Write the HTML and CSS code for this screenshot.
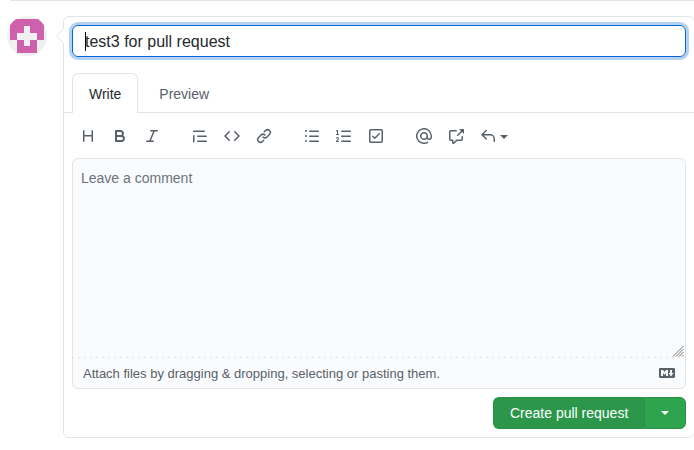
FILE: index.html
```html
<!DOCTYPE html>
<html lang="en">
<head>
<meta charset="utf-8">
<title>Open a pull request</title>
<link rel="stylesheet" href="styles.css">
</head>
<body>
<main class="page">
  <div class="divider"></div>
  <div class="timeline">
    <svg class="avatar" viewBox="0 0 40 40" shape-rendering="crispEdges">
      <path fill="#f0f0f0" d="M0 0h40v40H0z"/>
      <path fill="#cf61ac" fill-rule="evenodd" d="M3 3h34v20.500h-7V37H10V23.500H3zM17 10v7h-7v6.500h7V30h6v-6.500h7V17h-7v-7z"/>
    </svg>
    <form class="box">
      <svg class="pointer" viewBox="0 0 8 16"><path fill="#fff" d="M8 0L.7 8 8 16z"/><path fill="none" stroke="#e1e4e8" d="M7.500 .5L.7 8l6.800 7.500"/></svg>
      <div class="title"><span class="caret"></span>test3 for pull request</div>
      <nav class="tabs"><span class="tab active">Write</span><span class="tab">Preview</span></nav>
      <div class="toolbar">
        <div class="group">
          <svg viewBox="0 0 16 16"><path d="M3.75 2a.75.75 0 01.75.75V7h7V2.75a.75.75 0 011.5 0v10.5a.75.75 0 01-1.5 0V8.5h-7v4.75a.75.75 0 01-1.5 0V2.75A.75.75 0 013.75 2z"/></svg>
          <svg viewBox="0 0 16 16"><path fill-rule="evenodd" d="M4 2a1 1 0 00-1 1v10a1 1 0 001 1h5.5a3.500 3.500 0 001.852-6.470A3.500 3.500 0 008.500 2H4zm4.500 5a1.500 1.500 0 100-3H5v3h3.500zM5 9v3h4.500a1.500 1.500 0 000-3H5z"/></svg>
          <svg viewBox="0 0 16 16"><path d="M6 2.75A.75.75 0 016.75 2h6.5a.75.75 0 010 1.5h-2.505l-3.858 9H9.25a.75.75 0 010 1.5h-6.5a.75.75 0 010-1.5h2.505l3.858-9H6.75A.75.75 0 016 2.75z"/></svg>
        </div>
        <div class="group">
          <svg viewBox="0 0 16 16"><path d="M1.75 2.5a.75.75 0 000 1.5h10.5a.75.75 0 000-1.5H1.75zm4 5a.75.75 0 000 1.5h8.5a.75.75 0 000-1.5h-8.5zm0 5a.75.75 0 000 1.5h8.5a.75.75 0 000-1.5h-8.5zM2.5 7.75a.75.75 0 00-1.5 0v6a.75.75 0 001.5 0v-6z"/></svg>
          <svg viewBox="0 0 16 16"><path d="M4.72 3.22a.75.75 0 011.06 1.06L2.06 8l3.72 3.72a.75.75 0 11-1.06 1.06L.47 8.53a.75.75 0 010-1.06l4.25-4.25zm6.56 0a.75.75 0 10-1.06 1.06L13.94 8l-3.72 3.72a.75.75 0 101.06 1.06l4.25-4.25a.75.75 0 000-1.06l-4.25-4.25z"/></svg>
          <svg viewBox="0 0 16 16"><path d="M7.775 3.275a.75.75 0 001.06 1.06l1.25-1.25a2 2 0 112.83 2.83l-2.5 2.5a2 2 0 01-2.83 0 .75.75 0 00-1.06 1.06 3.5 3.5 0 004.95 0l2.5-2.5a3.5 3.5 0 00-4.95-4.95l-1.25 1.25zm-4.69 9.64a2 2 0 010-2.83l2.5-2.5a2 2 0 012.83 0 .75.75 0 001.06-1.06 3.5 3.5 0 00-4.95 0l-2.5 2.5a3.5 3.5 0 004.95 4.95l1.25-1.25a.75.75 0 00-1.06-1.06l-1.25 1.25a2 2 0 01-2.83 0z"/></svg>
        </div>
        <div class="group">
          <svg viewBox="0 0 16 16"><path d="M2 4a1 1 0 100-2 1 1 0 000 2zm3.75-1.5a.75.75 0 000 1.5h8.5a.75.75 0 000-1.5h-8.5zm0 5a.75.75 0 000 1.5h8.5a.75.75 0 000-1.5h-8.5zm0 5a.75.75 0 000 1.5h8.5a.75.75 0 000-1.5h-8.5zM3 8a1 1 0 11-2 0 1 1 0 012 0zm-1 6a1 1 0 100-2 1 1 0 000 2z"/></svg>
          <svg viewBox="0 0 16 16"><path d="M2.003 2.5a.5.5 0 00-.723-.447l-1.003.5a.5.5 0 00.446.895l.28-.14V6H.5a.5.5 0 000 1h2.006a.5.5 0 100-1h-.503V2.5zM5 3.25a.75.75 0 01.75-.75h8.5a.75.75 0 010 1.5h-8.5A.75.75 0 015 3.25zm0 5a.75.75 0 01.75-.75h8.5a.75.75 0 010 1.5h-8.5A.75.75 0 015 8.25zm0 5a.75.75 0 01.75-.75h8.5a.75.75 0 010 1.5h-8.5a.75.75 0 01-.75-.75zM.924 10.32l.003-.004a.851.851 0 01.144-.153A.66.66 0 011.5 10c.195 0 .306.068.374.146a.57.57 0 01.128.376c0 .453-.269.682-.8 1.078l-.035.025C.692 11.98 0 12.495 0 13.5a.5.5 0 00.5.5h2.003a.5.5 0 000-1H1.146c.132-.197.351-.372.654-.597l.047-.035c.47-.35 1.156-.858 1.156-1.845 0-.365-.118-.744-.377-1.038-.268-.303-.658-.484-1.126-.484-.48 0-.84.202-1.068.392a1.858 1.858 0 00-.348.384l-.01.018a.5.5 0 00.851.525z"/></svg>
          <svg viewBox="0 0 16 16"><path fill-rule="evenodd" d="M2.5 2.75a.25.25 0 01.25-.25h10.5a.25.25 0 01.25.25v10.5a.25.25 0 01-.25.25H2.75a.25.25 0 01-.25-.25V2.75zM2.75 1A1.75 1.75 0 001 2.75v10.5c0 .966.784 1.75 1.75 1.75h10.5A1.75 1.75 0 0015 13.25V2.75A1.75 1.75 0 0013.25 1H2.75zm9.03 5.28a.75.75 0 00-1.06-1.06L6.75 9.19 5.28 7.72a.75.75 0 00-1.06 1.06l2 2a.75.75 0 001.06 0l4.5-4.5z"/></svg>
        </div>
        <div class="group">
          <svg viewBox="0 0 16 16"><path fill-rule="evenodd" d="M4.75 2.37a6.5 6.5 0 006.5 11.26.75.75 0 01.75 1.298 8 8 0 113.994-7.273.754.754 0 01.006.095v1.5a2.75 2.75 0 01-5.072 1.475A4 4 0 1112 8v1.25a1.25 1.25 0 002.5 0V7.867a6.5 6.5 0 00-9.75-5.496V2.37zM10.5 8a2.5 2.5 0 10-5 0 2.5 2.5 0 005 0z"/></svg>
          <svg viewBox="0 0 16 16"><path d="M16 1.25v4.146a.25.25 0 01-.427.177L14.03 4.03l-3.75 3.75a.75.75 0 11-1.06-1.06l3.75-3.75-1.543-1.543A.25.25 0 0111.604 1h4.146a.25.25 0 01.25.25zM2.75 3.5a.25.25 0 00-.25.25v7.5c0 .138.112.25.25.25h2a.75.75 0 01.75.75v2.19l2.72-2.72a.75.75 0 01.53-.22h4.5a.25.25 0 00.25-.25v-2.5a.75.75 0 111.5 0v2.5A1.75 1.75 0 0113.25 13H9.06l-2.573 2.573A1.457 1.457 0 014 14.543V13H2.75A1.75 1.75 0 011 11.25v-7.5C1 2.784 1.784 2 2.75 2h5.5a.75.75 0 010 1.5h-5.5z"/></svg>
          <span class="reply"><svg viewBox="0 0 16 16"><path d="M6.78 1.97a.75.75 0 010 1.06L3.81 6h6.44A4.75 4.75 0 0115 10.75v2.5a.75.75 0 01-1.5 0v-2.5a3.25 3.25 0 00-3.25-3.25H3.81l2.97 2.97a.75.75 0 11-1.06 1.06L1.47 7.28a.75.75 0 010-1.06l4.25-4.25a.75.75 0 011.06 0z"/></svg><i class="down"></i></span>
        </div>
      </div>
      <div class="editor">
        <div class="comment">Leave a comment
          <svg class="grip" viewBox="0 0 12 12"><path d="M1 11.500L11.500 1M4 11.500l7.500-7.500M7 11.500L11.500 7M10 11.500l1.500-1.500"/></svg>
        </div>
        <div class="attach"><span>Attach files by dragging &amp; dropping, selecting or pasting them.</span>
          <svg viewBox="0 0 16 16"><path fill-rule="evenodd" d="M14.85 3H1.15C.52 3 0 3.52 0 4.15v7.69C0 12.48.52 13 1.15 13h13.69c.64 0 1.15-.52 1.15-1.15v-7.7C16 3.52 15.48 3 14.85 3zM9 11H7V8L5.5 9.92 4 8v3H2V5h2l1.5 2L7 5h2v6zm2.99.5L9.5 8H11V5h2v3h1.5l-2.51 3.500z"/></svg>
        </div>
      </div>
      <div class="actions"><span class="create">Create pull request</span><span class="more"><i class="down"></i></span></div>
    </form>
  </div>
</main>
</body>
</html>
```
FILE: styles.css
```css
* { box-sizing: border-box; }
body {
  margin: 0;
  overflow: hidden;
  background: #fff;
  color: #24292e;
  font: 14px/21px "Liberation Sans", Arial, sans-serif;
}
.page { width: 695px; }
.divider { height: 1px; margin-left: 10px; background: #e1e4e8; }
.timeline { display: flex; gap: 16px; padding: 15px 0 0 7px; }
.avatar { width: 40px; height: 40px; border-radius: 50%; flex: none; }
.box {
  position: relative;
  width: 632px;
  height: 422px;
  padding-top: 8px;
  border: 1px solid #e1e4e8;
  border-radius: 6px;
}
.pointer { position: absolute; left: -8px; top: 11px; width: 8px; height: 16px; }
.title {
  display: flex;
  align-items: center;
  height: 32px;
  margin: 0 8px;
  padding-left: 12px;
  border: 1px solid #0366d6;
  border-radius: 6px;
  box-shadow: 0 0 0 3px rgba(3, 102, 214, .3);
  font-size: 16px;
}
.caret { width: 1px; height: 19px; margin-right: -1px; background: #000; }
.tabs {
  display: flex;
  height: 40px;
  margin-top: 16px;
  padding-left: 8px;
  border-bottom: 1px solid #e1e4e8;
}
.tab { height: 40px; padding: 10px 16px; border: 1px solid transparent; color: #586069; margin-right: 4.3px; }
.active {
  width: 66px;
  border-color: #e1e4e8;
  border-bottom: 0;
  border-radius: 6px 6px 0 0;
  background: #fff;
  color: #24292e;
}
.toolbar { display: flex; gap: 32px; height: 45px; padding: 15px 16px 0; }
.group { display: flex; gap: 16px; }
svg { display: block; width: 16px; height: 16px; fill: #586069; }
.reply { display: flex; gap: 4px; }
.down { width: 8px; height: 4px; border: 4px solid transparent; border-top-color: #586069; border-bottom: 0; }
.reply .down { margin-top: 7px; }
.editor {
  height: 231px;
  margin: 0 8px;
  border: 1px solid #e1e4e8;
  border-radius: 6px;
  background: #fafbfc;
}
.comment {
  position: relative;
  height: 199px;
  padding: 9px 8px;
  background: repeating-linear-gradient(90deg, #dfe2e5 0 1px, transparent 1px 5px, #dfe2e5 5px 6px) bottom / 100% 1px no-repeat;
  color: #6a737d;
}
.grip { position: absolute; right: 1px; bottom: 1px; width: 12px; height: 12px; fill: none; stroke: #555; stroke-width: .8; }
.attach { display: flex; justify-content: space-between; align-items: center; height: 30px; padding: 0 10px; color: #586069; font-size: 13px; }
.actions { display: flex; justify-content: flex-end; margin: 8px 8px 0; color: #fff; }
.create, .more { height: 32px; border: 1px solid #2a8f47; background: #2c974b; }
.create { width: 151px; padding: 5px 0 0 16px; border-radius: 6px 0 0 6px; border-right: 0; white-space: nowrap; }
.more { display: flex; justify-content: center; align-items: center; width: 42px; border-radius: 0 6px 6px 0; background: #2ea44f; }
.more .down { border-top-color: #fff; }
```
